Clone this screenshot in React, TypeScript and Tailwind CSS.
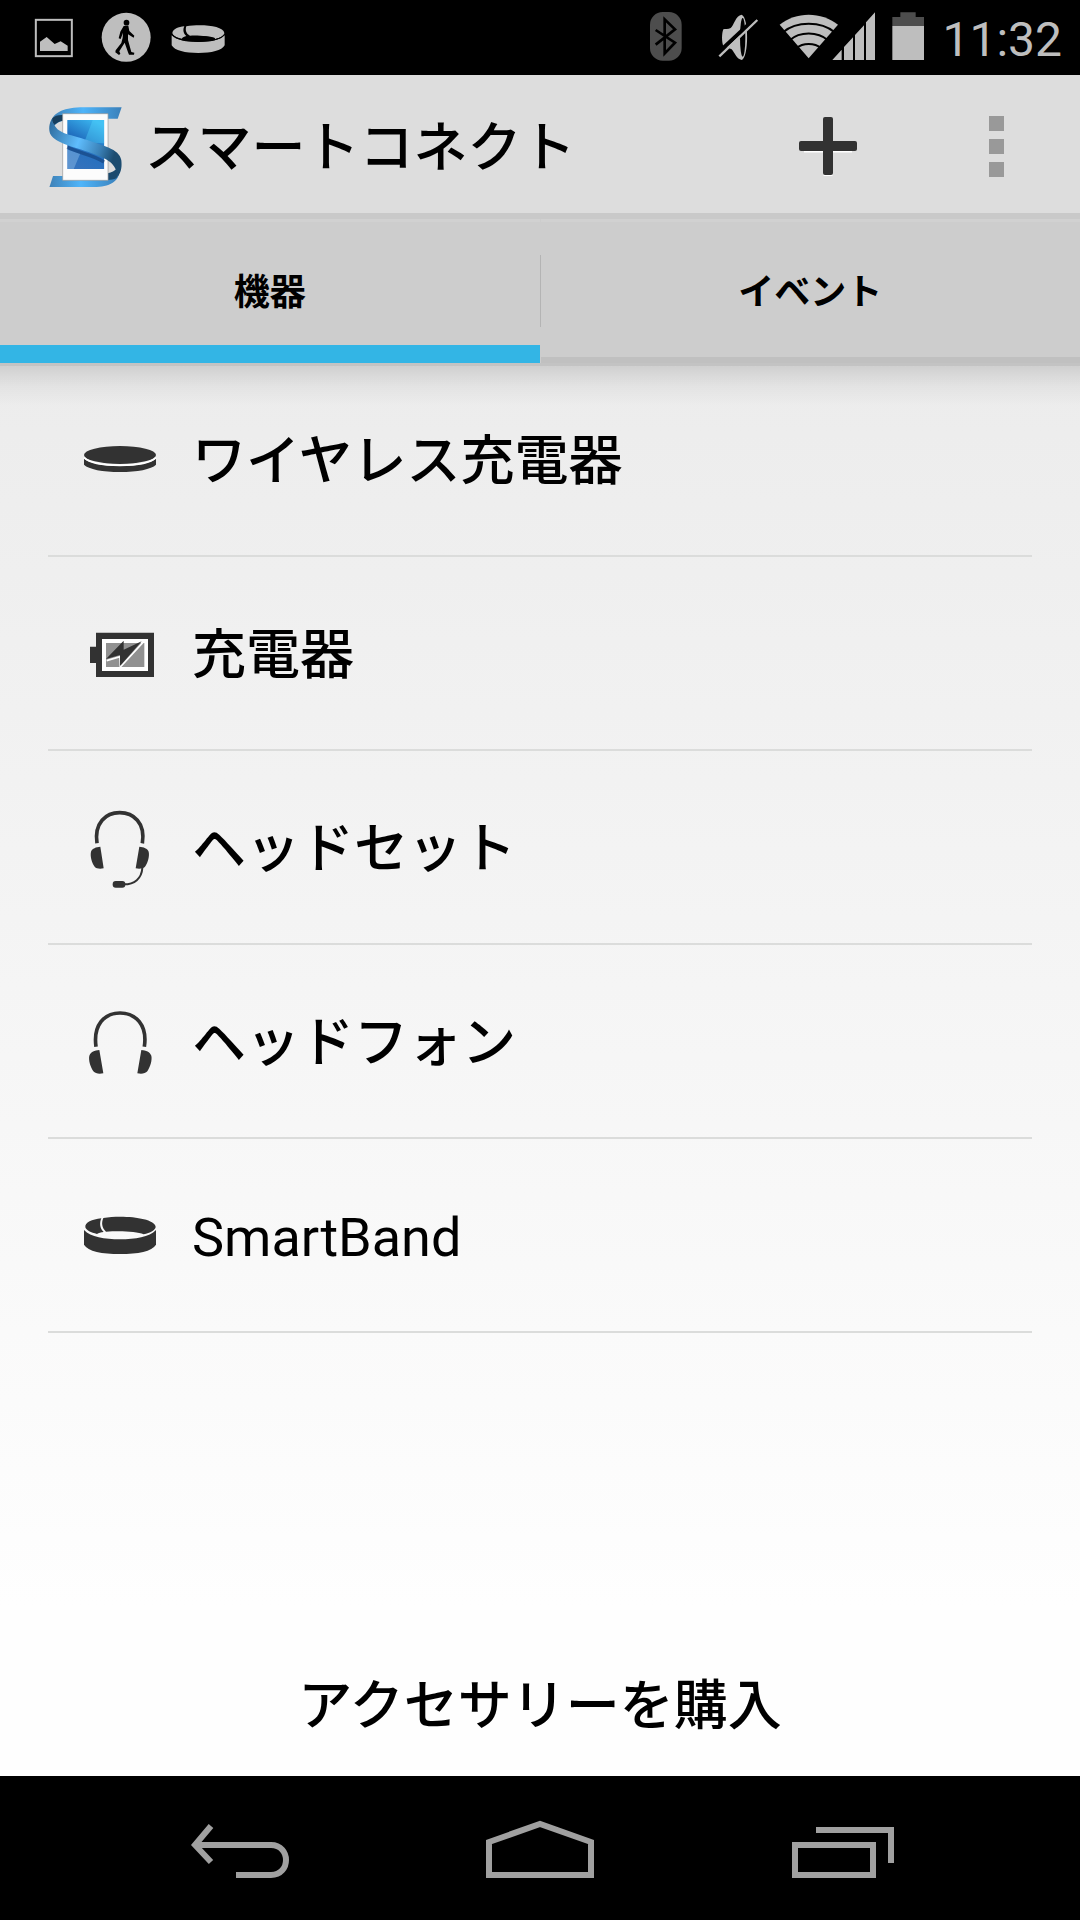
import type { ReactNode } from "react";

const STATUS_COLOR = "#bebebe";

function PictureIcon() {
  return (
    <svg viewBox="54 0 216 225" className="h-[75px] w-[72px]" aria-hidden>
      <rect x="107.500" y="59.500" width="108" height="109" fill="none" stroke={STATUS_COLOR} strokeWidth="6" />
      <path d="M120 153v-28l20-14 24 21 18-8 21 13v16Z" fill={STATUS_COLOR} />
    </svg>
  );
}

function WalkIcon() {
  return (
    <svg viewBox="271 0 216 225" className="h-[75px] w-[72px]" aria-hidden>
      <circle cx="379.500" cy="112" r="73.500" fill={STATUS_COLOR} />
      <circle cx="380.500" cy="68" r="8.500" fill="#000" />
      <path d="M372 78l14-1 3 16 15 14-2 6-17-10v17l10 36 9 2-1 6h-15l-3-7-10-29-16 26 3 7-4 4-11-8 1-6 17-22 4-16 1-15-7 19-6-2 5-20Z" fill="#000" />
    </svg>
  );
}

function StatusBandIcon() {
  return (
    <svg viewBox="487 0 216 225" className="h-[75px] w-[72px]" aria-hidden>
      <path d="M516 106c14 15 44 20 80 20s65-5 79-20v30c-8 16-40 23-79 23s-72-7-80-23Z" fill={STATUS_COLOR} />
      <path d="M518 99c2-12 18-18 36-20-5 10-3 22 6 29-6 2-11 4-14 8-14-3-26-8-28-17ZM560 79c45-7 111-2 114 20 0 9-13 15-27 18-16-9-48-11-76-10-12-5-15-18-11-28Z" fill={STATUS_COLOR} />
      <path d="M518 103c8 14 40 21 78 21s70-7 78-21" fill="none" stroke="#000" strokeWidth="3" />
      <ellipse cx="600" cy="116" rx="46" ry="8" fill="#000" />
    </svg>
  );
}

function BluetoothIcon() {
  return (
    <svg viewBox="3 0 216 225" className="h-[75px] w-[72px]" aria-hidden>
      <rect x="63" y="36" width="95" height="146" rx="38" fill="#4d4d4d" />
      <path d="M80 90l58 38-31 32V58l31 30-58 46" fill="none" stroke="#000" strokeWidth="8" />
    </svg>
  );
}

function MuteIcon() {
  return (
    <svg viewBox="219 0 216 225" className="h-[75px] w-[72px]" aria-hidden>
      <path d="M283 88c5-2 15 0 22-4 10-8 15-38 33-40 22 8 22 128 0 136-15-3-20-20-30-32l-25-10c-5-12-5-38 0-50Z" fill={STATUS_COLOR} />
      <ellipse cx="341" cy="112" rx="8" ry="58" fill="#000" />
      <path d="M266 160L382 52" stroke="#000" strokeWidth="12" />
      <path d="M271 169L385 60" stroke={STATUS_COLOR} strokeWidth="7" />
    </svg>
  );
}

function NetworkIcon() {
  return (
    <svg viewBox="435 0 318 225" className="h-[75px] w-[106px]" aria-hidden>
      <path d="M452 74c48-40 126-40 175 0l-88 101Z" fill={STATUS_COLOR} />
      <path d="M462 97c40-34 114-34 155 0M482 121c30-27 84-27 115 0M502 145c20-17 54-17 75 0" fill="none" stroke="#000" strokeWidth="6" />
      <path d="M610 180l28-31v31ZM645 180v-39l27-29v68ZM678 180v-75l27-29v104ZM711 180V67l27-30v143Z" fill={STATUS_COLOR} />
    </svg>
  );
}

function BatteryIcon() {
  return (
    <svg viewBox="786 0 96 225" className="h-[75px] w-8" aria-hidden>
      <path d="M787 78V51h24V37h46v14h25v27Z" fill="#4d4d4d" />
      <rect x="787" y="78" width="95" height="102" fill={STATUS_COLOR} />
    </svg>
  );
}

function AppLogo() {
  return (
    <svg viewBox="36 42 235 252" preserveAspectRatio="none" className="size-[84px]" aria-hidden>
      <defs>
        <linearGradient id="strip" x1="0" x2="1" y1="0" y2="0">
          <stop offset="0" stopColor="#3f82b8" />
          <stop offset="0.450" stopColor="#4fb5fa" />
          <stop offset="1" stopColor="#3a80ba" />
        </linearGradient>
        <linearGradient id="ribbon" x1="0" x2="1" y1="0" y2="0.300">
          <stop offset="0" stopColor="#2b6798" />
          <stop offset="0.480" stopColor="#5fbdfd" />
          <stop offset="0.800" stopColor="#397fb5" />
          <stop offset="1" stopColor="#1c4c70" />
        </linearGradient>
        <linearGradient id="screen" x1="0.700" x2="0.300" y1="0" y2="1">
          <stop offset="0" stopColor="#3ab4ee" />
          <stop offset="0.450" stopColor="#2170c0" />
          <stop offset="1" stopColor="#3572bc" />
        </linearGradient>
      </defs>
      <path d="M256 52H150C95 52 68 68 60 90l8 16c8-8 15-12 24-14v-6h153Z" fill="url(#strip)" />
      <path d="M62 85c6-8 18-11 30-10v17c-10 1-18 6-24 13-6-5-8-12-6-20Z" fill="#173f5e" />
      <path d="M54 291l10-33h130c30-2 42-10 52-23 8 20-3 38-20 46-16 8-32 10-56 10Z" fill="url(#strip)" />
      <path d="M217 250c11-3 20-7 26-15 6 13 4 22-2 30-7 4-15 5-24 5Z" fill="#1b4a6e" />
      <path d="M91 71h127v200H91Z" fill="#fcfcfc" stroke="#999" strokeWidth="2" />
      <path d="M104 90h103v147H104Z" fill="url(#screen)" />
      <path d="M175 90h32v70l-56-2Z" fill="#55dcff" opacity="0.350" />
      <path d="M104 178c14 7 28 11 36 13l-18 46h-18Z" fill="#9cc7ee" opacity="0.400" />
      <path d="M104 172c40 20 70 22 103 44" fill="none" stroke="#0a2d60" strokeWidth="10" opacity="0.450" />
      <path d="M62 85c-10 16-10 34-6 46 16 32 76 40 124 62 35 15 60 25 65 67 11-14 12-34 10-50-5-34-55-44-95-60-42-16-82-18-92-46-5-5-7-12-6-19Z" fill="url(#ribbon)" />
    </svg>
  );
}

function WirelessChargerIcon() {
  return (
    <svg viewBox="36 -27 288 288" className="size-24" fill="#323232" aria-hidden>
      <ellipse cx="180" cy="105" rx="108" ry="27" />
      <path d="M72 116c18 14 60 22 108 22s90-8 108-22v18c-14 14-56 22-108 22s-94-8-108-22Z" />
      <path d="M72 113c16 16 58 23 108 23s92-7 108-23" fill="none" stroke="#fff" strokeWidth="5" />
    </svg>
  );
}

function ChargerIcon() {
  return (
    <svg viewBox="36 15 288 288" className="size-24" aria-hidden>
      <path d="M90 140h18V98h174v133H108v-42H90Z" fill="#323232" />
      <path d="M126 117h138v96H126Z" fill="#fff" />
      <path d="M138 129h115v72H138Z" fill="#919191" />
      <path d="M140 182l40-12 1 31 68-74" fill="none" stroke="#fff" strokeWidth="5" />
      <path d="M138 177l53-55v27l54-25-65 74v-33Z" fill="#323232" />
    </svg>
  );
}

function HeadsetIcon() {
  return (
    <svg viewBox="36 27 288 288" className="size-24" fill="#323232" aria-hidden>
      <path d="M111 160c-9-62 27-92 68-92s78 30 68 92" fill="none" stroke="#323232" strokeWidth="11" />
      <path d="M121 170l10 65c-12 2-22 1-27-5-9-13-14-32-11-45 4-10 15-14 28-15ZM238 170l-11 65c12 2 22 1 28-5 9-13 14-32 11-45-4-10-15-14-28-15Z" />
      <path d="M247 234c-2 32-24 49-55 49" fill="none" stroke="#323232" strokeWidth="6" />
      <rect x="158" y="273" width="38" height="20" rx="9" />
    </svg>
  );
}

function HeadphonesIcon() {
  return (
    <svg viewBox="36 9 288 288" className="size-24" fill="#323232" aria-hidden>
      <path d="M108 170c-9-65 25-101 72-101s83 36 73 101" fill="none" stroke="#323232" strokeWidth="11" />
      <path d="M118 180l12 70c-13 2-24 1-30-6-9-14-15-34-12-47 4-11 16-16 30-17ZM244 180l-12 70c13 2 24 1 30-6 9-14 15-34 12-47-4-11-16-16-30-17Z" />
    </svg>
  );
}

function SmartBandIcon() {
  return (
    <svg viewBox="36 -9 288 288" className="size-24" fill="#323232" aria-hidden>
      <path d="M72 120c20 21 62 28 108 28s88-7 108-28v44c-12 20-54 28-108 28S84 184 72 164Z" />
      <path d="M76 112c-2-14 20-24 48-27-6 14-5 30 7 41-8 1-15 3-20 6-18-4-33-11-35-20ZM130 84c62-9 152 0 157 26 0 10-16 18-36 23-20-9-70-11-113-8-13-12-14-27-8-41Z" />
    </svg>
  );
}

const DEVICES: { label: string; icon: ReactNode; weight: string }[] = [
  { label: "ワイヤレス充電器", icon: <WirelessChargerIcon />, weight: "font-medium" },
  { label: "充電器", icon: <ChargerIcon />, weight: "font-medium" },
  { label: "ヘッドセット", icon: <HeadsetIcon />, weight: "font-medium" },
  { label: "ヘッドフォン", icon: <HeadphonesIcon />, weight: "font-medium" },
  { label: "SmartBand", icon: <SmartBandIcon />, weight: "font-normal" },
];

export default function App() {
  return (
    <div className="flex min-h-screen flex-col bg-black font-[Roboto,'Noto_Sans_CJK_JP',sans-serif] text-black">
      {/* Status bar */}
      <div className="flex h-[75px] items-center justify-between px-[18px]">
        <div className="flex">
          <PictureIcon />
          <WalkIcon />
          <StatusBandIcon />
        </div>
        <div className="flex items-center">
          <BluetoothIcon />
          <MuteIcon />
          <NetworkIcon />
          <div className="ml-3">
            <BatteryIcon />
          </div>
          <time className="ml-[18px] pt-1 text-5xl text-[#bebebe]">11:32</time>
        </div>
      </div>

      {/* Action bar */}
      <header className="flex h-[138px] items-center bg-[#dddddd] pt-1 pl-[43px]">
        <AppLogo />
        <h1 className="ml-[18px] flex-1 pt-1.5 text-[54px] leading-none font-medium">スマートコネクト</h1>
        <button type="button" aria-label="追加" className="flex h-full w-[168px] items-center justify-center">
          <svg viewBox="0 0 60 62" className="h-[62px] w-[60px]" aria-hidden>
            <path d="M6 33h48M30 7v54" stroke="#fff" strokeWidth="9" strokeLinejoin="round" />
            <rect x="1" y="26" width="58" height="10" rx="2" fill="#323232" />
            <rect x="25" y="2" width="10" height="58" rx="2" fill="#323232" />
          </svg>
        </button>
        <button type="button" aria-label="その他" className="flex h-full w-[168px] flex-col items-center justify-center gap-2">
          <span className="size-[15px] bg-[#999999]" />
          <span className="size-[15px] bg-[#999999]" />
          <span className="size-[15px] bg-[#999999]" />
        </button>
      </header>

      {/* Tabs */}
      <div role="tablist" className="relative flex h-[150px] items-stretch border-t-[6px] border-[#c9c9c9] bg-[#cdcdcd] text-4xl font-bold">
        <button type="button" role="tab" aria-selected="true" className="flex-1 border-t-[3px] border-b-[18px] border-t-[#d1d1d1] border-b-[#33b5e5] pt-[18px]">
          機器
        </button>
        <span className="mt-9 h-[72px] w-px bg-[#b4b4b4]" />
        <button type="button" role="tab" aria-selected="false" className="flex-1 border-t-[3px] border-b-[6px] border-t-[#d1d1d1] border-b-[#c0c0c0] pt-1.5">
          イベント
        </button>
        <div className="pointer-events-none absolute inset-x-0 top-full h-[3px] bg-[#c3c3c3]" />
        <div className="pointer-events-none absolute inset-x-0 top-full mt-[3px] h-10 bg-linear-to-b from-black/12 via-black/4 to-transparent" />
      </div>

      {/* Device list */}
      <main className="flex flex-1 flex-col justify-between bg-linear-to-b from-[#ececec] to-[#fefefe] to-88%">
        <ul className="px-12">
          {DEVICES.map((device) => (
            <li key={device.label} className="border-b-2 border-[#dbdcdb]">
              <button type="button" className="flex h-48 w-full items-center gap-6 pl-6 text-left text-[54px] leading-none">
                {device.icon}
                <span className={`pt-1.5 ${device.weight}`}>{device.label}</span>
              </button>
            </li>
          ))}
        </ul>
        <button type="button" className="h-36 pt-1.5 text-center text-[54px] leading-none font-medium">
          アクセサリーを購入
        </button>
      </main>

      {/* Navigation bar */}
      <nav className="flex h-36 justify-center pt-0.5">
        <button type="button" aria-label="戻る" className="flex w-[300px] items-center justify-center">
          <svg viewBox="0 0 100 58" className="h-[58px] w-[100px]" fill="none" stroke="#a0a0a0" strokeWidth="6" aria-hidden>
            <path d="M21 6L5 25l16 17M6 25h75c20 0 20 30 0 30H46" />
          </svg>
        </button>
        <button type="button" aria-label="ホーム" className="flex w-[300px] items-center justify-center">
          <svg viewBox="0 0 108 58" className="h-[58px] w-[108px]" fill="none" stroke="#a0a0a0" strokeWidth="6" aria-hidden>
            <path d="M3 55V22L54 4l51 18v33Z" />
          </svg>
        </button>
        <button type="button" aria-label="最近使ったアプリ" className="flex w-[300px] items-center justify-center pl-2">
          <svg viewBox="0 0 104 58" className="h-[58px] w-[104px]" fill="none" stroke="#a0a0a0" strokeWidth="6" aria-hidden>
            <path d="M3 25h78v30H3ZM24 10h75v33" />
          </svg>
        </button>
      </nav>
    </div>
  );
}
